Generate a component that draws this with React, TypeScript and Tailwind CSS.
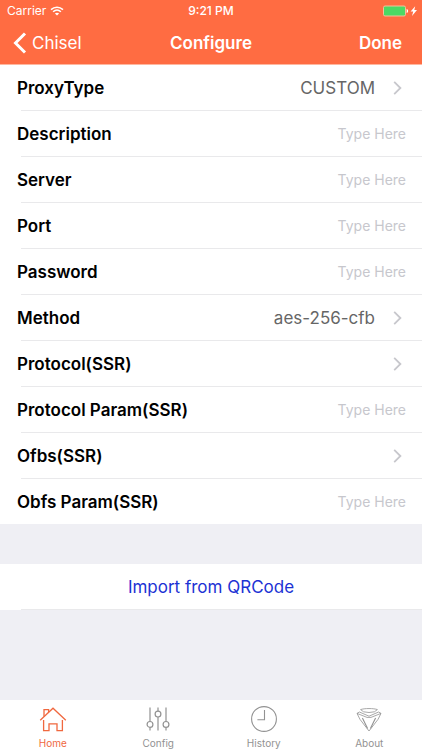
import React from "react";

type Field =
  | { kind: "link"; label: string; value: string }
  | { kind: "text"; label: string; id: string };

const fields: Field[] = [
  { kind: "link", label: "ProxyType", value: "CUSTOM" },
  { kind: "text", label: "Description", id: "description" },
  { kind: "text", label: "Server", id: "server" },
  { kind: "text", label: "Port", id: "port" },
  { kind: "text", label: "Password", id: "password" },
  { kind: "link", label: "Method", value: "aes-256-cfb" },
  { kind: "link", label: "Protocol(SSR)", value: "" },
  { kind: "text", label: "Protocol Param(SSR)", id: "protocol-param" },
  { kind: "link", label: "Ofbs(SSR)", value: "" },
  { kind: "text", label: "Obfs Param(SSR)", id: "obfs-param" },
];

function WifiIcon() {
  return (
    <svg className="h-[10px] w-[14px]" viewBox="0 0 14 10" fill="none" stroke="currentColor" strokeWidth="1.5" aria-hidden="true">
      <path d="M1 3.6C4.5 .3 9.5 .3 13 3.6" />
      <path d="M3.1 5.8C5.4 3.7 8.6 3.7 10.9 5.8" />
      <path d="M7 9.6 4.9 7.5c1.2-1.1 3-1.1 4.2 0z" fill="currentColor" stroke="none" />
    </svg>
  );
}

function BatteryIcon() {
  return (
    <svg className="h-[12px] w-[36px]" viewBox="0 0 36 12" aria-hidden="true">
      <rect x="1.5" y="1" width="22" height="10" rx="1.5" fill="#4cd964" stroke="#f5c09a" strokeWidth="1" />
      <path d="M24.6 4c2 .5 2 3.5 0 4z" fill="#fff" />
      <path d="M33.2 1.2 28.6 6.6h2.6L30 11l5-5.9h-2.7z" fill="#fff" />
    </svg>
  );
}

function Chevron() {
  return (
    <svg className="h-[14px] w-[9px]" viewBox="0 0 9 14" fill="none" stroke="#c7c7cc" strokeWidth="1.8" aria-hidden="true">
      <path d="M1.2 .9 7.4 7l-6.2 6.1" />
    </svg>
  );
}

function HomeIcon() {
  return (
    <svg className="h-[26px] w-[28px]" viewBox="0 0 28 26" fill="none" stroke="currentColor" strokeWidth="1.3" aria-hidden="true">
      <path d="M1.2 14.2 14 2.2 26.8 14.2" />
      <path d="M5 10.6V3.6h4.6V6.2" />
      <path d="M4.6 14v10.6h5.4v-6.8h8v6.8h5.4V14" />
    </svg>
  );
}

function ConfigIcon() {
  return (
    <svg className="h-[26px] w-[28px]" viewBox="0 0 28 26" fill="none" stroke="currentColor" strokeWidth="1.2" aria-hidden="true">
      <path d="M6 1.5v14M6 21.4v3M14 1.5v3.7M14 11v13.4M22 1.5v14M22 21.4v3" />
      <circle cx="6" cy="18.4" r="2.9" />
      <circle cx="14" cy="8.1" r="2.9" />
      <circle cx="22" cy="18.4" r="2.9" />
    </svg>
  );
}

function HistoryIcon() {
  return (
    <svg className="h-[26px] w-[28px]" viewBox="0 0 28 26" fill="none" stroke="currentColor" strokeWidth="1.1" aria-hidden="true">
      <circle cx="14" cy="13" r="12.4" />
      <path d="M14.5 4v9.8H7.4" />
    </svg>
  );
}

function AboutIcon() {
  return (
    <svg className="h-[26px] w-[28px]" viewBox="0 0 28 26" fill="none" stroke="currentColor" strokeWidth=".8" strokeLinejoin="round" aria-hidden="true">
      <path d="M5.6 3.6C9 2.2 19 2.2 22.4 3.6L19.4 5.8Q14 7.2 8.6 5.8z" />
      <path d="M4.4 6 2 7.4 5 13.4 14 25 23 13.4 26 7.4 23.6 6 14 10.2z" />
      <path d="M2 7.4 12 11.4H16L26 7.4" />
      <path d="M7.4 12 12.6 22.6M20.6 12 15.4 22.6" strokeWidth="1.1" />
    </svg>
  );
}

const tabs = [
  { label: "Home", Icon: HomeIcon, active: true },
  { label: "Config", Icon: ConfigIcon, active: false },
  { label: "History", Icon: HistoryIcon, active: false },
  { label: "About", Icon: AboutIcon, active: false },
];

function FieldRow({ field }: { field: Field }) {
  if (field.kind === "link") {
    return (
      <button type="button" className="flex h-full w-full items-center pr-5 pl-[17px] text-left">
        <span className="flex-1 font-semibold">{field.label}</span>
        <span className="mr-[18px] text-[#666666]">{field.value}</span>
        <Chevron />
      </button>
    );
  }
  return (
    <div className="flex h-full items-center pr-4 pl-[17px]">
      <label htmlFor={field.id} className="font-semibold">
        {field.label}
      </label>
      <input
        id={field.id}
        type="text"
        placeholder="Type Here"
        className="min-w-0 flex-1 bg-transparent text-right text-sm outline-none placeholder:text-[#c7c7cd]"
      />
    </div>
  );
}

export default function App() {
  return (
    <div className="flex min-h-screen flex-col bg-[#efeff4] font-[Inter,'Liberation_Sans',sans-serif] text-[17px] leading-6 text-black">
      <header className="border-b border-[#ffb79f] bg-[#ff6c42] text-white">
        <div className="grid h-[22px] grid-cols-3 items-center text-xs">
          <div className="flex items-center gap-1 pl-[7px]">
            <span>Carrier</span>
            <WifiIcon />
          </div>
          <span className="text-center font-medium">9:21 PM</span>
          <div className="flex justify-end pr-1">
            <BatteryIcon />
          </div>
        </div>
        <div className="grid h-[42px] grid-cols-3 items-center">
          <button type="button" className="flex items-center gap-[5px] pl-[13px]">
            <svg className="h-[22px] w-[14px]" viewBox="0 0 14 22" fill="none" stroke="currentColor" strokeWidth="3" aria-hidden="true">
              <path d="M12 1.5 2.5 11 12 20.5" />
            </svg>
            Chisel
          </button>
          <h1 className="text-center font-semibold">Configure</h1>
          <button type="button" className="pr-5 text-right font-semibold">
            Done
          </button>
        </div>
      </header>

      <main className="flex flex-1 flex-col gap-10">
        <ul className="bg-white">
          {fields.map((field) => (
            <li key={field.label} className="group">
              <div className="h-[45px]">
                <FieldRow field={field} />
              </div>
              <div className="ml-[21px] h-px bg-[#e9e9eb] group-last:hidden" />
            </li>
          ))}
        </ul>
        <div className="bg-white">
          <button type="button" className="h-[45px] w-full text-[#1c32d4]">
            Import from QRCode
          </button>
          <div className="ml-[21px] h-px bg-[#e9e9eb]" />
        </div>
      </main>

      <nav className="sticky bottom-0 grid h-[50px] grid-cols-4 bg-white">
        {tabs.map(({ label, Icon, active }) => (
          <a
            key={label}
            href={`#${label.toLowerCase()}`}
            aria-current={active ? "page" : undefined}
            className={
              active
                ? "flex flex-col items-center gap-[5px] pt-[6px] text-[10px] leading-3 text-[#f0683f]"
                : "flex flex-col items-center gap-[5px] pt-[6px] text-[10px] leading-3 text-[#929292]"
            }
          >
            <Icon />
            {label}
          </a>
        ))}
      </nav>
    </div>
  );
}
